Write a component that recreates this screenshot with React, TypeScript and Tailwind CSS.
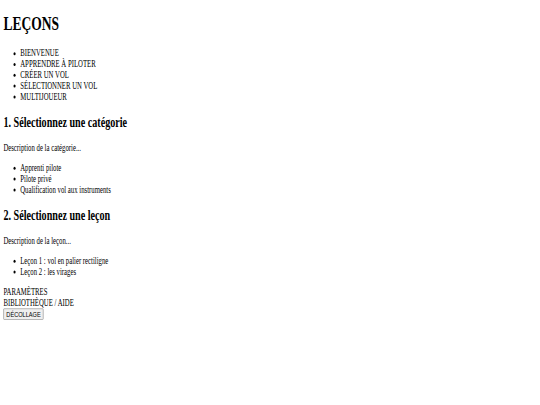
const menu = [
  "BIENVENUE",
  "APPRENDRE À PILOTER",
  "CRÉER UN VOL",
  "SÉLECTIONNER UN VOL",
  "MULTIJOUEUR",
];

const categories = [
  "Apprenti pilote",
  "Pilote privé",
  "Qualification vol aux instruments",
];

const lessons = [
  "Leçon 1 : vol en palier rectiligne",
  "Leçon 2 : les virages",
];

export default function App() {
  return (
    <div className="w-[540px] h-[405px] overflow-hidden bg-white">
      {/* page is laid out at 1280x675, then squashed to the 540x405 window */}
      <div className="flow-root w-[1280px] h-[675px] px-2 origin-top-left scale-x-[0.421875] scale-y-[0.6] font-['Liberation_Serif','Times_New_Roman',serif] text-[16px] leading-[normal] text-black">
        <h1 className="text-[32px] font-bold my-[21.44px]">LEÇONS</h1>

        <ul className="list-disc pl-10 my-4">
          {menu.map((item) => (
            <li key={item}>{item}</li>
          ))}
        </ul>

        <h2 className="text-[24px] font-bold my-[19.92px]">
          1. Sélectionnez une catégorie
        </h2>
        <p className="my-4">Description de la catégorie...</p>
        <ul className="list-disc pl-10 my-4">
          {categories.map((item) => (
            <li key={item}>{item}</li>
          ))}
        </ul>

        <h2 className="text-[24px] font-bold my-[19.92px]">
          2. Sélectionnez une leçon
        </h2>
        <p className="my-4">Description de la leçon...</p>
        <ul className="list-disc pl-10 my-4">
          {lessons.map((item) => (
            <li key={item}>{item}</li>
          ))}
        </ul>

        <div>PARAMÈTRES</div>
        <div>BIBLIOTHÈQUE / AIDE</div>
        <button
          type="button"
          className="px-[6px] py-[1px] bg-[#efefef] border border-[#767676] rounded-[2px] text-[13.333px] leading-[normal] font-['Liberation_Sans',Arial,sans-serif]"
        >
          DÉCOLLAGE
        </button>
      </div>
    </div>
  );
}
